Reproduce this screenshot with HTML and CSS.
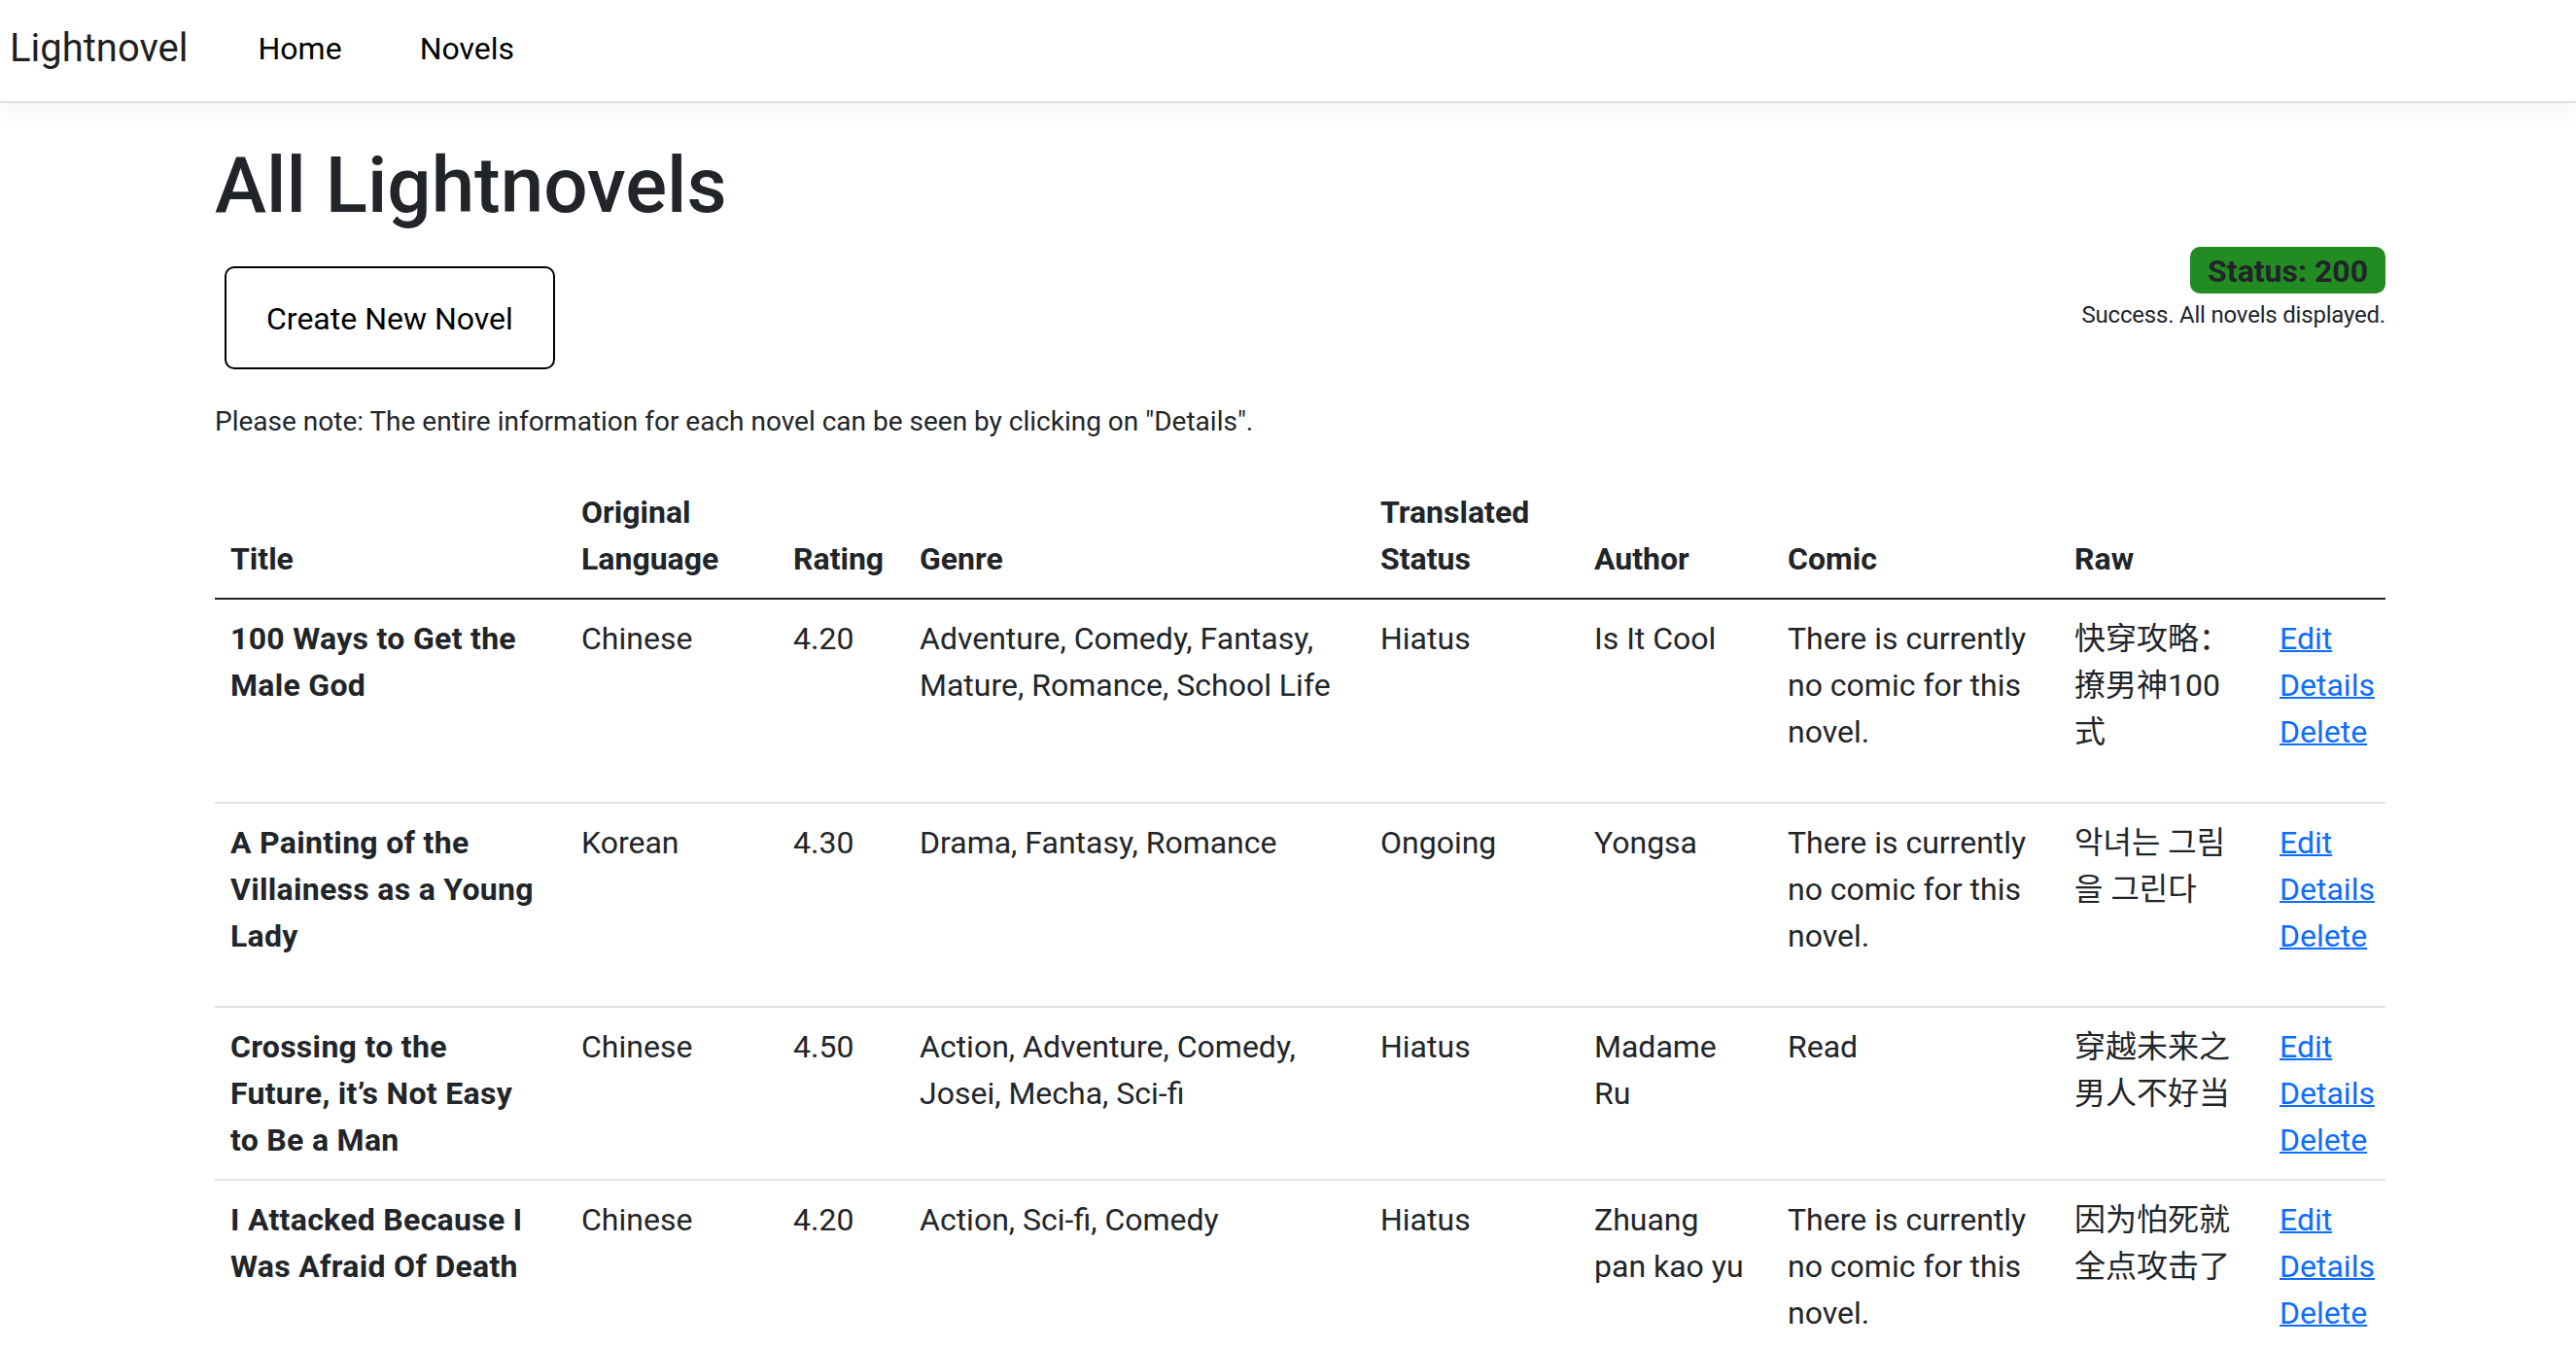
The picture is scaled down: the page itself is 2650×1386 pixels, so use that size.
FILE: index.html
```html
<!DOCTYPE html>
<html lang="en">
<head>
<meta charset="utf-8">
<title>All Lightnovels</title>
<link rel="stylesheet" href="styles.css">
</head>
<body>
<header class="navbar">
  <a class="brand" href="#">Lightnovel</a>
  <nav class="nav-links">
    <a class="nav-link" href="#">Home</a>
    <a class="nav-link" href="#">Novels</a>
  </nav>
</header>

<main class="container">
  <h1 class="page-title">All Lightnovels</h1>

  <div class="toolbar">
    <a class="btn-create" href="#">Create New Novel</a>
    <div class="status">
      <span class="badge">Status: 200</span>
      <small class="status-text">Success. All novels displayed.</small>
    </div>
  </div>

  <p class="note">Please note: The entire information for each novel can be seen by clicking on "Details".</p>

  <table class="novels">
    <colgroup>
      <col class="c-title">
      <col class="c-lang">
      <col class="c-rating">
      <col class="c-genre">
      <col class="c-status">
      <col class="c-author">
      <col class="c-comic">
      <col class="c-raw">
      <col class="c-actions">
    </colgroup>
    <thead>
      <tr>
        <th>Title</th>
        <th>Original Language</th>
        <th>Rating</th>
        <th>Genre</th>
        <th>Translated Status</th>
        <th>Author</th>
        <th>Comic</th>
        <th>Raw</th>
        <th></th>
      </tr>
    </thead>
    <tbody>
      <tr>
        <td class="title">100 Ways to Get the Male God</td>
        <td>Chinese</td>
        <td>4.20</td>
        <td>Adventure, Comedy, Fantasy, Mature, Romance, School Life</td>
        <td>Hiatus</td>
        <td>Is It Cool</td>
        <td><p class="no-comic">There is currently no comic for this novel.</p></td>
        <td lang="zh-CN">快穿攻略：撩男神100式</td>
        <td class="actions"><a href="#">Edit</a><a href="#">Details</a><a href="#">Delete</a></td>
      </tr>
      <tr>
        <td class="title">A Painting of the Villainess as a Young Lady</td>
        <td>Korean</td>
        <td>4.30</td>
        <td>Drama, Fantasy, Romance</td>
        <td>Ongoing</td>
        <td>Yongsa</td>
        <td><p class="no-comic">There is currently no comic for this novel.</p></td>
        <td lang="ko" class="ko">악녀는 그림을 그린다</td>
        <td class="actions"><a href="#">Edit</a><a href="#">Details</a><a href="#">Delete</a></td>
      </tr>
      <tr>
        <td class="title">Crossing to the Future, it’s Not Easy to Be a Man</td>
        <td>Chinese</td>
        <td>4.50</td>
        <td>Action, Adventure, Comedy, Josei, Mecha, Sci-fi</td>
        <td>Hiatus</td>
        <td>Madame Ru</td>
        <td>Read</td>
        <td lang="zh-CN">穿越未来之男人不好当</td>
        <td class="actions"><a href="#">Edit</a><a href="#">Details</a><a href="#">Delete</a></td>
      </tr>
      <tr>
        <td class="title">I Attacked Because I Was Afraid Of Death</td>
        <td>Chinese</td>
        <td>4.20</td>
        <td>Action, Sci-fi, Comedy</td>
        <td>Hiatus</td>
        <td>Zhuang pan kao yu</td>
        <td><p class="no-comic">There is currently no comic for this novel.</p></td>
        <td lang="zh-CN">因为怕死就全点攻击了</td>
        <td class="actions"><a href="#">Edit</a><a href="#">Details</a><a href="#">Delete</a></td>
      </tr>
    </tbody>
  </table>
</main>
</body>
</html>
```

FILE: styles.css
```css
* { box-sizing: border-box; }

html, body {
  margin: 0;
  background: #fff;
}

body {
  font-family: Roboto, "Noto Sans CJK SC", sans-serif;
  font-size: 32px;
  line-height: 48px;
  color: #212529;
}

a { color: #0d6efd; }

/* ---------- navbar ---------- */
.navbar {
  display: flex;
  align-items: center;
  height: 106px;
  padding: 0 0 4px 10px;
  background: #fff;
  border-bottom: 2px solid #dee2e6;
  box-shadow: 0 8px 24px rgba(0, 0, 0, 0.05);
}

.brand {
  font-size: 40px;
  line-height: 60px;
  color: rgba(0, 0, 0, 0.9);
  text-decoration: none;
  margin-right: 34px;
}

.nav-links {
  display: flex;
}

.nav-link {
  padding: 0 40px;
  font-size: 32px;
  line-height: 48px;
  color: #000;
  text-decoration: none;
}

.nav-link:first-child {
  padding-left: 38px;
}

/* ---------- main ---------- */
.container {
  width: 2233px;
  margin: 32px 0 0 221px;
}

.page-title {
  margin: 0 0 11px;
  padding-top: 5px;
  font-size: 80px;
  line-height: 96px;
  font-weight: 500;
}

.toolbar {
  display: flex;
  justify-content: space-between;
  align-items: flex-start;
}

.btn-create {
  display: inline-block;
  margin: 24px 0 0 10px;
  padding: 28px 41px 26px;
  border: 2px solid #000;
  border-radius: 10px;
  color: #000;
  text-decoration: none;
  font-size: 32px;
  line-height: 48px;
}

.status {
  display: flex;
  flex-direction: column;
  align-items: flex-end;
  padding-top: 4px;
}

.badge {
  display: inline-block;
  padding: 9px 18px 7px;
  background: #228b22;
  color: #212529;
  border-radius: 10px;
  font-size: 32px;
  line-height: 32px;
  font-weight: 700;
}

.status-text {
  margin-top: 4px;
  font-size: 24px;
  line-height: 36px;
  letter-spacing: -0.2px;
}

.note {
  margin: 33px 0 32px;
  font-size: 28px;
  line-height: 42px;
}

/* ---------- table ---------- */
.novels {
  width: 2233px;
  table-layout: fixed;
  border-collapse: collapse;
}

.c-title { width: 361px; }
.c-lang { width: 218px; }
.c-rating { width: 130px; }
.c-genre { width: 474px; }
.c-status { width: 220px; }
.c-author { width: 199px; }
.c-comic { width: 295px; }
.c-raw { width: 211px; }
.c-actions { width: 125px; }

.novels th,
.novels td {
  padding: 16px;
  text-align: left;
}

.novels th {
  vertical-align: bottom;
  font-weight: 700;
  border-bottom: 2px solid #212529;
}

.novels td {
  vertical-align: top;
  border-bottom: 2px solid #dee2e6;
}

.novels td.title {
  padding-right: 28px;
  font-weight: 700;
  letter-spacing: 0.3px;
}

.ko {
  font-family: Roboto, "Noto Sans CJK KR", sans-serif;
}

.no-comic {
  margin: 0 0 32px;
}

.actions a {
  display: block;
  width: max-content;
  text-decoration-thickness: 2px;
}
```
